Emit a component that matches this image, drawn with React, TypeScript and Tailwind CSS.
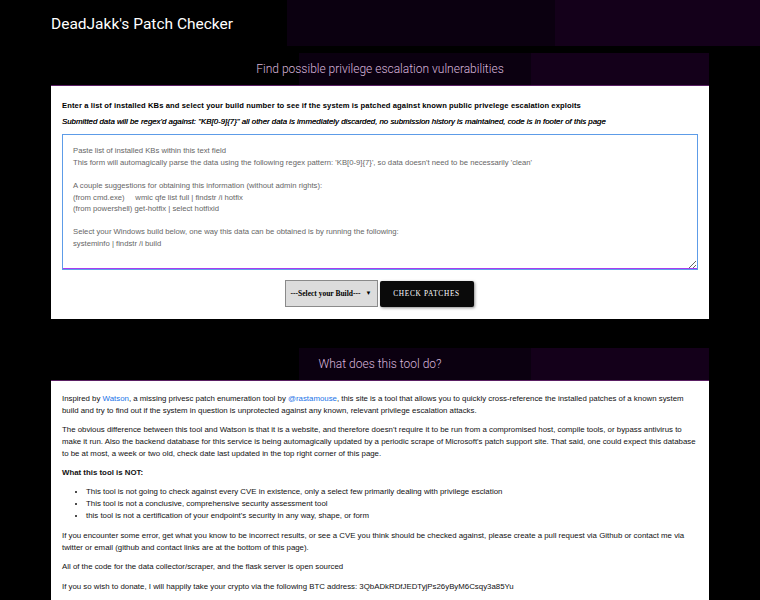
const bandBg =
  "bg-[linear-gradient(to_right,#000_0%,#000_37.7%,#0b0010_37.7%,#0b0010_73%,#14001a_73%,#14001a_100%)]";

function CardHeader({ title }: { title: string }) {
  return (
    <div
      className={`flex h-[33px] items-center justify-center border-b border-[#5a1f63] ${bandBg}`}
    >
      <h2 className="font-['Roboto',Arial,sans-serif] text-[12px] font-light text-[#d9b6dc]">
        {title}
      </h2>
    </div>
  );
}

const placeholder = `Paste list of installed KBs within this text field
This form will automagically parse the data using the following regex pattern: 'KB[0-9]{7}', so data doesn't need to be necessarily 'clean'

A couple suggestions for obtaining this information (without admin rights):
(from cmd.exe)     wmic qfe list full | findstr /i hotfix
(from powershell) get-hotfix | select hotfixid

Select your Windows build below, one way this data can be obtained is by running the following:
systeminfo | findstr /i build`;

export default function App() {
  return (
    <div className="min-h-screen bg-black font-['Liberation_Sans',Arial,sans-serif]">
      {/* top bar */}
      <header className={`flex h-[46px] items-center px-[51px] pt-[3px] ${bandBg}`}>
        <h1 className="font-['Roboto',Arial,sans-serif] text-[15.5px] text-white">
          DeadJakk's Patch Checker
        </h1>
      </header>

      <main className="px-[51px] pt-[7px]">
        {/* checker card */}
        <section>
          <CardHeader title="Find possible privilege escalation vulnerabilities" />
          <div className="bg-white px-[11px] pt-[14px] pb-[12px] text-[8px] leading-[11.6px] text-black">
            <p className="text-[7.6px] font-bold tracking-[0.11px]">
              Enter a list of installed KBs and select your build number to see if the system is patched against
              known public privelege escalation exploits
            </p>
            <p className="mt-[4px] text-[7.85px] italic text-[#111] [text-shadow:0_0_0.3px_#111]">
              Submitted data will be regex'd against: "KB[0-9]{"{7}"}" all other data is immediately discarded, no
              submission history is maintained, code is in footer of this page
            </p>
            <textarea
              className="mt-[7px] block h-[136px] w-full resize-y border border-[#5d9ce8] px-[10px] pt-[10px] text-[7.7px] leading-[11.6px] shadow-[inset_0_-1px_0_#a83cf0] outline-none placeholder:text-[#666]"
              placeholder={placeholder}
            />
            <div className="mt-[10px] flex items-start justify-center gap-[2px] pr-[2px]">
              <div className="flex h-[27px] w-[93px] items-center justify-center gap-[5px] border-[1.5px] border-[#8a8a8a] bg-[#dcdcdc] font-['Liberation_Serif',serif] text-[7.5px] font-bold">
                <span>---Select your Build---</span>
                <span className="text-[6px]">▼</span>
              </div>
              <button className="mt-[1px] h-[26px] w-[94px] rounded-[2px] bg-[#0a0a0a] font-['Liberation_Serif',serif] text-[7.3px] tracking-[0.7px] text-white shadow-[1px_1px_3px_rgba(0,0,0,0.45)]">
                CHECK PATCHES
              </button>
            </div>
          </div>
        </section>

        {/* about card */}
        <section className="mt-[29px]">
          <CardHeader title="What does this tool do?" />
          <div className="bg-white px-[11px] pt-[12px] pb-[14px] text-[7.85px] leading-[11.7px] text-[#111]">
            <p>
              Inspired by <span className="text-[#1a73e8]">Watson</span>, a missing privesc patch enumeration tool
              by <span className="text-[#1a73e8]">@rastamouse</span>, this site is a tool that allows you to quickly
              cross-reference the installed patches of a known system build and try to find out if the system in
              question is unprotected against any known, relevant privilege escalation attacks.
            </p>
            <p className="mt-[7.6px]">
              The obvious difference between this tool and Watson is that it is a website, and therefore doesn't
              require it to be run from a compromised host, compile tools, or bypass antivirus to make it run. Also
              the backend database for this service is being automagically updated by a periodic scrape of
              Microsoft's patch support site. That said, one could expect this database to be at most, a week or two
              old, check date last updated in the top right corner of this page.
            </p>
            <p className="mt-[7.6px] font-bold">What this tool is NOT:</p>
            <ul className="mt-[7.6px] list-disc pl-[24px]">
              <li>
                This tool is not going to check against every CVE in existence, only a select few primarily dealing
                with privilege esclation
              </li>
              <li>This tool is not a conclusive, comprehensive security assessment tool</li>
              <li>this tool is not a certification of your endpoint's security in any way, shape, or form</li>
            </ul>
            <p className="mt-[9px]">
              If you encounter some error, get what you know to be incorrect results, or see a CVE you think should
              be checked against, please create a pull request via Github or contact me via twitter or email (github
              and contact links are at the bottom of this page).
            </p>
            <p className="mt-[7.6px]">
              All of the code for the data collector/scraper, and the flask server is open sourced
            </p>
            <p className="mt-[7.6px]">
              If you so wish to donate, I will happily take your crypto via the following BTC address:
              3QbADkRDfJEDTyjPs26yByM6Csqy3a85Yu
            </p>
          </div>
        </section>
      </main>
    </div>
  );
}
